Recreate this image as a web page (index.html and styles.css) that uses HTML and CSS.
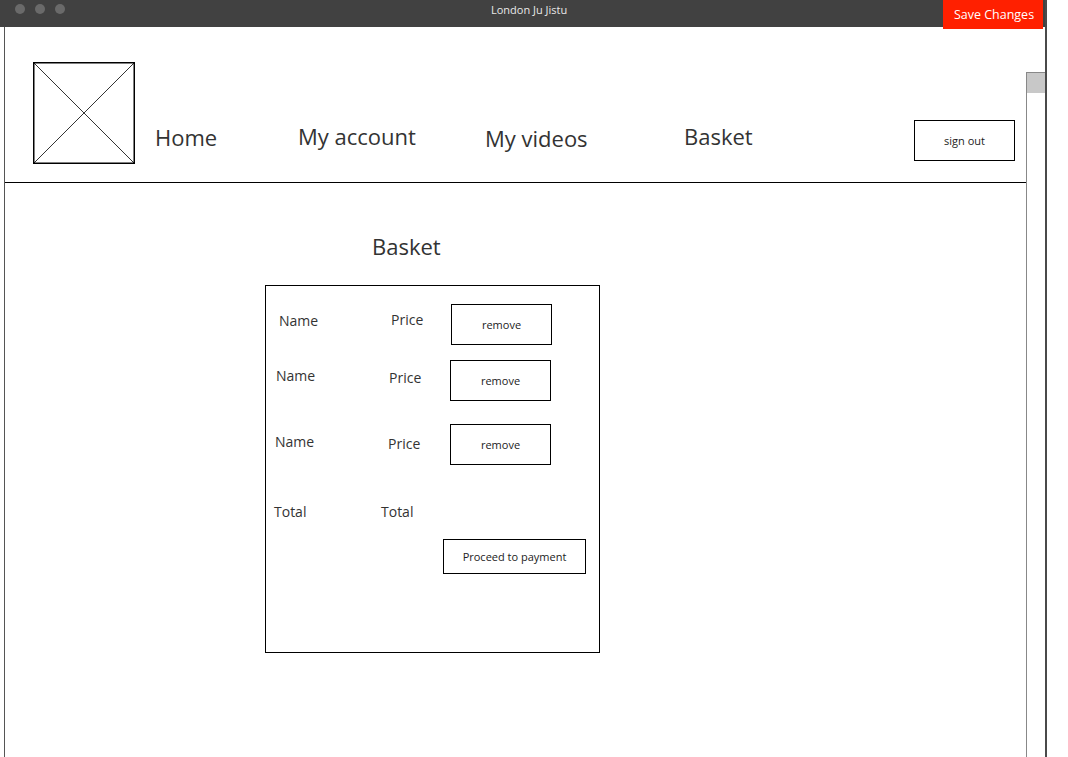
FILE: index.html
```html
<!DOCTYPE html>
<html>
<head>
<meta charset="utf-8">
<title>London Ju Jistu</title>
<link rel="stylesheet" href="styles.css">
</head>
<body>
<div class="window">
  <div class="titlebar">
    <div class="dots"><span class="dot"></span><span class="dot"></span><span class="dot"></span></div>
    <div class="title">London Ju Jistu</div>
    <button class="save">Save Changes</button>
  </div>
  <div class="frame">
    <div class="content">
      <header class="header">
        <svg class="logo" width="102" height="102" viewBox="0 0 102 102">
          <rect x="0.75" y="0.75" width="100.5" height="100.5" fill="#fff" stroke="#000" stroke-width="1.5"/>
          <line x1="1" y1="1" x2="101" y2="101" stroke="#000" stroke-width="0.8"/>
          <line x1="101" y1="1" x2="1" y2="101" stroke="#000" stroke-width="0.8"/>
        </svg>
        <nav class="nav">
          <a class="nav-item nav-home">Home</a>
          <a class="nav-item nav-account">My account</a>
          <a class="nav-item nav-videos">My videos</a>
          <a class="nav-item nav-basket">Basket</a>
        </nav>
        <button class="box-btn signout">sign out</button>
      </header>
      <main class="basket">
        <h1 class="heading">Basket</h1>
        <section class="card">
          <div class="row row-1">
            <span class="name">Name</span>
            <span class="price">Price</span>
            <button class="box-btn remove">remove</button>
          </div>
          <div class="row row-2">
            <span class="name">Name</span>
            <span class="price">Price</span>
            <button class="box-btn remove">remove</button>
          </div>
          <div class="row row-3">
            <span class="name">Name</span>
            <span class="price">Price</span>
            <button class="box-btn remove">remove</button>
          </div>
          <div class="total-row">
            <span class="total-label">Total</span>
            <span class="total-value">Total</span>
          </div>
          <button class="box-btn proceed">Proceed to payment</button>
        </section>
      </main>
    </div>
    <div class="scrollbar"><div class="thumb"></div></div>
  </div>
</div>
</body>
</html>
```

FILE: styles.css
```css
* { box-sizing: border-box; }
html, body { margin: 0; padding: 0; background: #fff; }
body {
  font-family: "Open Sans", "Liberation Sans", sans-serif;
  color: #333;
  width: 1068px;
  height: 757px;
  overflow: hidden;
}
.window {
  width: 1047px;
  height: 757px;
  border-right: 2px solid #4a4a4a;
  display: flex;
  flex-direction: column;
}
.titlebar {
  height: 27px;
  flex: none;
  background: #414141;
  display: flex;
  align-items: flex-start;
}
.dots {
  display: flex;
  gap: 10px;
  padding: 4px 0 0 15px;
  width: 65px;
}
.dot {
  width: 10px;
  height: 10px;
  border-radius: 50%;
  background: #6a6a6a;
  flex: none;
}
.title {
  margin-left: 426px;
  font-size: 11px;
  line-height: 14px;
  padding-top: 3px;
  color: #e8e8e8;
  white-space: nowrap;
}
.save {
  margin-left: auto;
  margin-right: 2px;
  width: 100px;
  height: 29px;
  border: 0;
  background: #ff2000;
  color: #fff;
  font-family: inherit;
  font-size: 12.5px;
  padding: 0 0 0 2px;
  flex: none;
}
.frame {
  flex: 1;
  display: flex;
  min-height: 0;
}
.content {
  margin-left: 4px;
  width: 1022px;
  border-left: 1px solid #555;
  flex: none;
}
.scrollbar {
  width: 19px;
  margin-top: 45px;
  border-left: 1px solid #888;
  border-top: 1px solid #888;
  flex: none;
}
.thumb {
  height: 20px;
  background: #c8c8c8;
}
.header {
  height: 156px;
  border-bottom: 1px solid #000;
  display: flex;
  align-items: flex-start;
  padding: 35px 0 0 28px;
}
.logo { flex: none; display: block; }
.nav {
  display: flex;
  margin-left: 20px;
  margin-top: 60px;
}
.nav-item {
  font-size: 22px;
  line-height: 30px;
  color: #333;
  white-space: nowrap;
}
.nav-home { width: 143px; }
.nav-account { width: 187px; margin-top: -1px; }
.nav-videos { width: 199px; margin-top: 1px; }
.nav-basket { width: 229px; margin-top: -1px; }
.box-btn {
  background: #fff;
  border: 1px solid #000;
  font-family: inherit;
  color: #222;
  padding: 0;
  display: block;
}
.signout {
  width: 101px;
  height: 41px;
  margin: 58px 0 0 1px;
  font-size: 11px;
}
.basket {
  padding-left: 260px;
}
.heading {
  margin: 48px 0 0 107px;
  font-size: 22px;
  line-height: 30px;
  font-weight: normal;
  color: #333;
}
.card {
  margin-top: 24px;
  width: 335px;
  height: 368px;
  border: 1px solid #000;
  padding-top: 18px;
}
.row {
  display: flex;
  align-items: flex-start;
  height: 41px;
}
.name, .price, .total-label, .total-value {
  font-size: 14px;
  line-height: 20px;
  white-space: nowrap;
}
.row-1 { padding-left: 13px; }
.row-1 .name { width: 112px; margin-top: 7px; }
.row-1 .price { width: 60px; margin-top: 6px; }
.row-2 { margin-top: 15px; padding-left: 10px; }
.row-2 .name { width: 113px; margin-top: 6px; }
.row-2 .price { width: 61px; margin-top: 8px; }
.row-3 { margin-top: 23px; padding-left: 9px; }
.row-3 .name { width: 113px; margin-top: 8px; }
.row-3 .price { width: 62px; margin-top: 10px; }
.remove {
  width: 101px;
  height: 41px;
  font-size: 11px;
}
.total-row {
  display: flex;
  margin-top: 37px;
  padding-left: 8px;
}
.total-label { width: 107px; }
.proceed {
  margin: 17px 0 0 177px;
  width: 143px;
  height: 35px;
  font-size: 11px;
}
```
